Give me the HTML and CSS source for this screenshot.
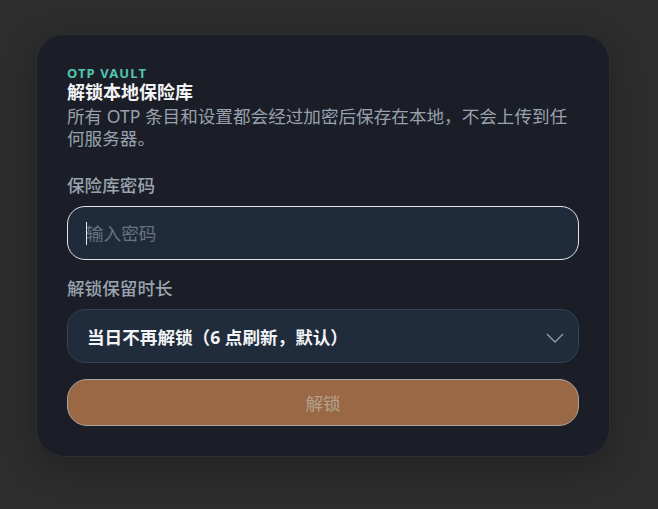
FILE: index.html
```html
<!DOCTYPE html>
<html lang="zh-CN">
<head>
<meta charset="utf-8">
<title>OTP Vault</title>
<link rel="stylesheet" href="styles.css">
</head>
<body>
<main class="card">
  <header class="head">
    <div class="eyebrow">OTP VAULT</div>
    <h1 class="title">解锁本地保险库</h1>
    <p class="desc">所有 OTP 条目和设置都会经过加密后保存在本地，不会上传到任何服务器。</p>
  </header>
  <form class="form">
    <label class="field">
      <span class="label">保险库密码</span>
      <span class="input-wrap">
        <input class="input" type="password" placeholder="输入密码">
      </span>
    </label>
    <div class="field field-gap">
      <span class="label">解锁保留时长</span>
      <button type="button" class="select">
        <span>当日不再解锁（6 点刷新，默认）</span>
        <svg class="chev" width="18" height="10" viewBox="0 0 18 10" aria-hidden="true"><path d="M1 1 L9 9 L17 1" fill="none" stroke="#8a94a3" stroke-width="1.5"/></svg>
      </button>
    </div>
    <button type="button" class="submit" disabled>解锁</button>
  </form>
</main>
</body>
</html>
```
FILE: styles.css
```css
* { box-sizing: border-box; }
html, body { margin: 0; }
body {
  background: #2d2d2d;
  padding: 34px 0 0 36px;
  font-family: "Noto Sans", "Noto Sans CJK SC", sans-serif;
  min-height: 509px;
}
.card {
  width: 574px;
  background: #1b1e27;
  border: 1px solid #2b2f38;
  border-radius: 28px;
  padding: 30px;
  box-shadow: 0 10px 30px rgba(0,0,0,0.25);
}
.head { display: flex; flex-direction: column; }
.eyebrow {
  font-size: 13px;
  line-height: 17px;
  font-weight: 700;
  letter-spacing: 1.1px;
  color: #52c4b2;
}
.title {
  margin: 0;
  font-size: 18px;
  line-height: 20px;
  font-weight: 700;
  color: #f3f4f6;
}
.desc {
  margin: 3px 0 0;
  font-size: 17.6px;
  line-height: 22px;
  color: #98a1ad;
}
.form {
  display: flex;
  flex-direction: column;
  margin-top: 25px;
}
.field { display: flex; flex-direction: column; gap: 10px; }
.field-gap { margin-top: 17px; }
.label {
  font-size: 17.6px;
  line-height: 22px;
  font-weight: 500;
  color: #9aa3ae;
}
.input-wrap { position: relative; display: block; }
.input-wrap::before {
  content: "";
  position: absolute;
  left: 19px;
  top: 16px;
  width: 1px;
  height: 23px;
  background: #e5e7eb;
}
.input {
  display: block;
  width: 100%;
  height: 54px;
  background: #1f2b3a;
  border: 1px solid #e2e4e8;
  border-radius: 18px;
  padding: 0 18px;
  font: inherit;
  font-size: 17.6px;
  color: #f3f4f6;
  outline: none;
}
.input::placeholder { color: #687280; }
.select {
  display: flex;
  align-items: center;
  justify-content: space-between;
  width: 100%;
  height: 54px;
  background: #202c3c;
  border: 1px solid #334152;
  border-radius: 18px;
  padding: 0 14px 0 19px;
  font: inherit;
  font-size: 17.6px;
  font-weight: 700;
  color: #f1f3f5;
  text-align: left;
  cursor: pointer;
}
.chev { display: block; margin-top: 4px; }
.submit {
  margin-top: 16px;
  height: 47px;
  width: 100%;
  background: #9a6844;
  border: 1px solid #a9a5a0;
  border-radius: 20px;
  font: inherit;
  font-size: 17.6px;
  color: #b3a291;
}
```
